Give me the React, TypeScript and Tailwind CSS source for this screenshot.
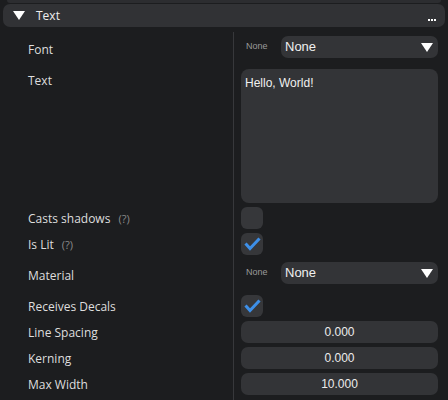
import React from 'react';

const labelFont = { fontFamily: '"Open Sans", "Noto Sans", sans-serif' };
const ctrlFont = { fontFamily: '"Liberation Sans", Arial, sans-serif' };

function Tri({ className = '' }: { className?: string }) {
  return (
    <svg width="12" height="9" viewBox="0 0 12 9" className={className}>
      <polygon points="0,0 12,0 6,9" fill="#ffffff" />
    </svg>
  );
}

function Check() {
  return (
    <div className="w-[22px] h-[22px] rounded-[6px] bg-[#36373a] flex items-center justify-center">
      <svg width="22" height="22" viewBox="0 0 22 22">
        <path d="M4.5 10.5 L9 15.5 L18.5 5.5" fill="none" stroke="#3d8fe8" strokeWidth="3" />
      </svg>
    </div>
  );
}

function Box() {
  return <div className="w-[22px] h-[22px] rounded-[6px] bg-[#36373a]" />;
}

function Select({ value }: { value: string }) {
  return (
    <div className="flex items-center h-[22px]">
      <span className="w-[40px] pl-[5px] text-[9px] text-[#9a9a9a]" style={ctrlFont}>None</span>
      <div className="flex-1 h-[22px] rounded-[7px] bg-[#333437] flex items-center justify-between pl-[4px] pr-[5px]">
        <span className="text-[13px] text-[#f0f0f0]" style={ctrlFont}>{value}</span>
        <Tri />
      </div>
    </div>
  );
}

function NumField({ value }: { value: string }) {
  return (
    <div className="h-[22px] rounded-[7px] bg-[#333437] flex items-center justify-center text-[12px] text-[#ececec]" style={ctrlFont}>
      {value}
    </div>
  );
}

function Row({
  label,
  help,
  pt,
  top,
  shift = 'translate-y-[1px]',
  children,
}: {
  label: string;
  help?: boolean;
  pt: string;
  top?: boolean;
  shift?: string;
  children: React.ReactNode;
}) {
  return (
    <div className="flex">
      <div className={`w-[233px] shrink-0 pl-[28px] flex ${pt} ${top ? 'items-start' : 'items-center'}`}>
        <span className={`text-[12px] leading-[16px] text-[#dedede] ${top ? 'mt-[4px]' : shift}`} style={labelFont}>{label}</span>
        {help && <span className={`ml-[8px] text-[11px] leading-[16px] text-[#8a8a8a] ${shift}`} style={labelFont}>(?)</span>}
      </div>
      <div className={`flex-1 border-l border-[#37383b] pl-[7px] pr-[10px] ${pt}`}>{children}</div>
    </div>
  );
}

export default function App() {
  return (
    <div className="w-[448px] h-[400px] overflow-hidden bg-[#1c1d1f] flex flex-col">
      <div className="h-[3px] mx-[7px] bg-[#2c2d30] rounded-b-[3px]" />
      <div className="mt-[1px] mx-[3px] h-[23px] rounded-[7px] bg-[#313235] flex items-center pl-[10px] pr-[9px]">
        <Tri />
        <span className="ml-[11px] text-[12px] text-[#eeeeee]" style={labelFont}>Text</span>
        <div className="ml-auto self-end mb-[6px] flex gap-[1px]">
          <div className="w-[2px] h-[2px] bg-white" />
          <div className="w-[2px] h-[2px] bg-white" />
          <div className="w-[2px] h-[2px] bg-white" />
        </div>
      </div>
      <div className="mt-[5px] flex-1 flex flex-col">
        <Row label="Font" pt="pt-[4px]" shift="translate-y-[3px]">
          <Select value="None" />
        </Row>
        <Row label="Text" pt="pt-[11px]" top>
          <div className="h-[134px] rounded-[8px] bg-[#333437] px-[4px] pt-[5px] text-[12px] text-[#f0f0f0]" style={ctrlFont}>
            Hello, World!
          </div>
        </Row>
        <Row label="Casts shadows" help pt="pt-[4px]">
          <Box />
        </Row>
        <Row label="Is Lit" help pt="pt-[4px]">
          <Check />
        </Row>
        <Row label="Material" pt="pt-[7px]" shift="translate-y-[3px]">
          <Select value="None" />
        </Row>
        <Row label="Receives Decals" pt="pt-[11px]">
          <Check />
        </Row>
        <Row label="Line Spacing" pt="pt-[4px]">
          <NumField value="0.000" />
        </Row>
        <Row label="Kerning" pt="pt-[4px]">
          <NumField value="0.000" />
        </Row>
        <Row label="Max Width" pt="pt-[4px]">
          <NumField value="10.000" />
        </Row>
        <div className="flex flex-1">
          <div className="w-[233px] shrink-0" />
          <div className="flex-1 border-l border-[#37383b]" />
        </div>
      </div>
    </div>
  );
}
